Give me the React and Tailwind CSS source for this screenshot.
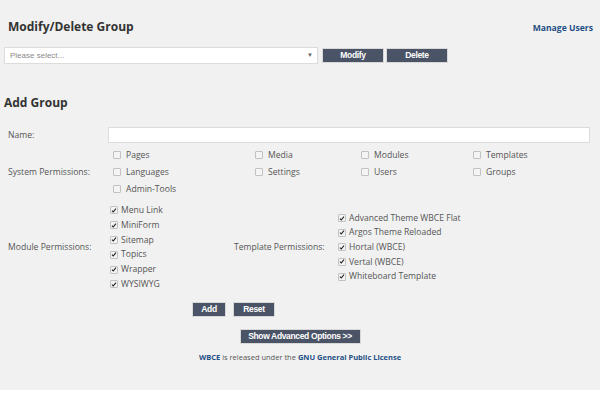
import React from 'react';

const btn =
  "h-[15px] border border-[#d8d8d8] bg-[#4b5467] text-white font-bold text-[8.5px] tracking-[-0.35px] leading-none font-['Liberation_Sans',Arial,sans-serif] flex items-center justify-center";

function Box({ checked }) {
  return (
    <span className="w-[8px] h-[8px] rounded-[1px] border border-[#c2c2c2] bg-[#f4f4f4] flex items-center justify-center shrink-0">
      {checked && (
        <svg viewBox="0 0 8 8" className="w-[7px] h-[7px]">
          <path d="M1.3 4.2 L3 6 L6.6 1.6" fill="none" stroke="#222" strokeWidth="1.5" />
        </svg>
      )}
    </span>
  );
}

function Check({ label, checked, gap = 'gap-[5px]' }) {
  return (
    <div className={`flex items-center ${gap}`}>
      <Box checked={checked} />
      <span>{label}</span>
    </div>
  );
}

export default function App() {
  const system = [
    ['Pages', 'Media', 'Modules', 'Templates'],
    ['Languages', 'Settings', 'Users', 'Groups'],
    ['Admin-Tools'],
  ];
  const modules = ['Menu Link', 'MiniForm', 'Sitemap', 'Topics', 'Wrapper', 'WYSIWYG'];
  const templates = ['Advanced Theme WBCE Flat', 'Argos Theme Reloaded', 'Hortal (WBCE)', 'Vertal (WBCE)', 'Whiteboard Template'];

  return (
    <div className="w-[600px] h-[400px] bg-white font-['Open_Sans',sans-serif] text-[#555] text-[8.6px]">
      <div className="h-[390px] bg-[#f1f1f1] overflow-hidden">
        {/* Modify / Delete */}
        <div className="flex items-baseline justify-between pt-[19px] pl-[8px] pr-[7px]">
          <h2 className="text-[12px] leading-[16px] font-bold text-[#333]">Modify/Delete Group</h2>
          <a className="text-[8.6px] font-bold text-[#1f4f85]">Manage Users</a>
        </div>
        <div className="flex items-center mt-[12px] pl-[4px]">
          <div className="w-[314px] h-[17px] bg-white border border-[#dcdcdc] flex items-center justify-between pl-[5px] pr-[4px] font-['Liberation_Sans',Arial,sans-serif] text-[8px] text-[#8a8a8a]">
            <span>Please select...</span>
            <span className="text-[6px] text-[#666]">▼</span>
          </div>
          <button className={`${btn} w-[62px] ml-[4px]`}>Modify</button>
          <button className={`${btn} w-[62px] ml-[2px]`}>Delete</button>
        </div>

        {/* Add Group */}
        <h2 className="text-[12px] leading-[16px] font-bold text-[#333] pl-[4px] mt-[31px]">Add Group</h2>
        <div className="flex items-center mt-[16px]">
          <span className="w-[108px] pl-[8px]">Name:</span>
          <div className="w-[482px] h-[16px] bg-white border border-[#dcdcdc]" />
        </div>

        <div className="flex items-center mt-[4px]">
          <span className="w-[113px] pl-[8px]">System Permissions:</span>
          <div className="grid grid-cols-[142px_106px_112px_1fr]">
            {system.flat().map((s) => (
              <div key={s} className="h-[17px] flex items-center">
                <Check label={s} />
              </div>
            ))}
          </div>
        </div>

        <div className="flex items-center mt-[5px]">
          <span className="w-[110px] pl-[8px]">Module Permissions:</span>
          <div className="w-[124px] flex flex-col">
            {modules.map((m) => (
              <div key={m} className="h-[14.8px] flex items-center">
                <Check label={m} checked gap="gap-[3px]" />
              </div>
            ))}
          </div>
          <span className="w-[104px]">Template Permissions:</span>
          <div className="flex flex-col">
            {templates.map((t) => (
              <div key={t} className="h-[14.6px] flex items-center">
                <Check label={t} checked gap="gap-[3px]" />
              </div>
            ))}
          </div>
        </div>

        <div className="flex gap-[7px] mt-[10px] pl-[192px]">
          <button className={`${btn} w-[34px]`}>Add</button>
          <button className={`${btn} w-[42px]`}>Reset</button>
        </div>
        <div className="flex justify-center mt-[12px]">
          <button className={`${btn} w-[121px]`}>Show Advanced Options &gt;&gt;</button>
        </div>
        <p className="text-center text-[7.5px] mt-[8px] text-[#555]">
          <a className="font-bold text-[#1f4f85]">WBCE</a> is released under the{' '}
          <a className="font-bold text-[#1f4f85]">GNU General Public License</a>
        </p>
      </div>
    </div>
  );
}
